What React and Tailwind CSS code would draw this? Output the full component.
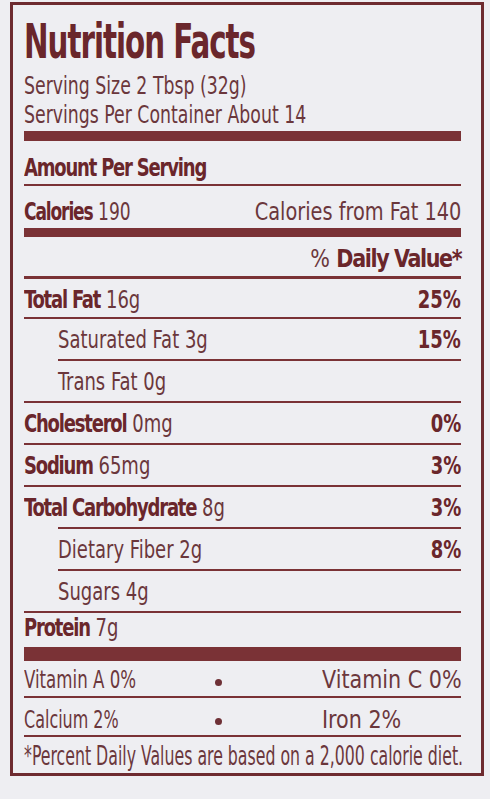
const NUTRIENTS = [
  { name: "Total Fat", amount: "16g", dv: "25%", bold: true, h: "h-[38px]", line: "full" },
  { name: "Saturated Fat", amount: "3g", dv: "15%", indent: true, line: "indent" },
  { name: "Trans Fat", amount: "0g", indent: true, line: "full" },
  { name: "Cholesterol", amount: "0mg", dv: "0%", bold: true, line: "full" },
  { name: "Sodium", amount: "65mg", dv: "3%", bold: true, line: "full" },
  { name: "Total Carbohydrate", amount: "8g", dv: "3%", bold: true, line: "indent" },
  { name: "Dietary Fiber", amount: "2g", dv: "8%", indent: true, line: "indent" },
  { name: "Sugars", amount: "4g", indent: true, line: "full" },
];

// the label face is a tall condensed grotesque; squeeze DejaVu Sans Condensed to match
function Cond({ right, scale = "scale-x-[0.8]", className = "", children }) {
  return (
    <span className={`inline-block whitespace-nowrap ${scale} ${right ? "origin-right" : "origin-left"} ${className}`}>
      {children}
    </span>
  );
}

function B({ children }) {
  return <span className="font-bold tracking-[-1.5px] text-[#6a262b]">{children}</span>;
}

function Rule({ indent, className = "h-[2px]" }) {
  return <div className={`${className} bg-[#7a3236] ${indent ? "ml-[34px]" : ""}`} />;
}

function NutrientRow({ item }) {
  return (
    <>
      <div className={`${item.h ?? "h-[40px]"} flex justify-between leading-[42px] ${item.indent ? "pl-[34px]" : ""}`}>
        <Cond>
          {item.bold ? <B>{item.name}</B> : item.name} {item.amount}
        </Cond>
        {item.dv && (
          <Cond right className="font-bold text-[#6a262b]">
            {item.dv}
          </Cond>
        )}
      </div>
      <Rule indent={item.line === "indent"} />
    </>
  );
}

function Dot({ className }) {
  return (
    <span className="w-[16px] shrink-0 flex justify-center">
      <span className={`w-[7px] h-[7px] rounded-full bg-[#6e3036] ${className}`} />
    </span>
  );
}

function VitaminRow({ left, leftScale, right, dot, className }) {
  return (
    <div className={`${className} flex items-start`}>
      <span className="w-[186px] shrink-0">
        <Cond scale={leftScale}>{left}</Cond>
      </span>
      <Dot className={dot} />
      <span className="ml-[96px] flex-1 min-w-0">
        <Cond scale="scale-x-[0.92]">{right}</Cond>
      </span>
    </div>
  );
}

export default function App() {
  return (
    <div className="w-[490px] h-[799px] overflow-hidden bg-[#eeeef2] pt-[2px] pl-[10px] text-[#6b373c] font-['DejaVu_Sans_Condensed','Liberation_Sans',sans-serif] text-[25px]">
      <div className="w-[474px] h-[774px] border-[3px] border-[#6e2b30] pl-[11px] pr-[20px]">
        <h1 className="mt-[12px] h-[48px] text-[48px] leading-[48px] font-bold tracking-[-1.5px] text-[#6a262b]">
          <Cond scale="scale-x-[0.68]">Nutrition Facts</Cond>
        </h1>
        <div className="mt-[6px] leading-[29px]">
          <div>
            <Cond scale="scale-x-[0.77]">Serving Size 2 Tbsp (32g)</Cond>
          </div>
          <div>
            <Cond scale="scale-x-[0.77]">Servings Per Container About 14</Cond>
          </div>
        </div>
        <div className="mt-[2px] h-[10px] bg-[#7a3236]" />

        <div className="h-[43px] leading-[53px]">
          <Cond>
            <B>Amount Per Serving</B>
          </Cond>
        </div>
        <Rule />
        <div className="h-[42px] leading-[51px] flex justify-between">
          <Cond scale="scale-x-[0.76]">
            <B>Calories</B> 190
          </Cond>
          <Cond right scale="scale-x-[0.86]">
            Calories from Fat 140
          </Cond>
        </div>
        <Rule className="h-[9px]" />
        <div className="h-[39px] leading-[43px] text-right">
          <Cond right scale="scale-x-[0.92]">
            % <B>Daily Value*</B>
          </Cond>
        </div>
        <Rule className="h-[3px]" />

        {NUTRIENTS.map((item) => (
          <NutrientRow key={item.name} item={item} />
        ))}

        <div className="h-[34px] leading-[30px]">
          <Cond>
            <B>Protein</B> 7g
          </Cond>
        </div>
        <Rule className="h-[14px]" />

        <VitaminRow
          className="h-[35px] leading-[37px]"
          left="Vitamin A 0%"
          leftScale="scale-x-[0.74]"
          right="Vitamin C 0%"
          dot="mt-[18px]"
        />
        <Rule />
        <VitaminRow
          className="h-[37px] leading-[43px]"
          left="Calcium 2%"
          leftScale="scale-x-[0.71]"
          right="Iron 2%"
          dot="mt-[20px]"
        />
        <Rule />
        <div className="h-[36px] leading-[38px] text-[26px]">
          <Cond scale="scale-x-[0.674]">*Percent Daily Values are based on a 2,000 calorie diet.</Cond>
        </div>
      </div>
      <div className="mt-[23px] ml-[20px] text-[22px] leading-none font-bold text-[#3a3034]">INGREDIENTS:</div>
    </div>
  );
}
